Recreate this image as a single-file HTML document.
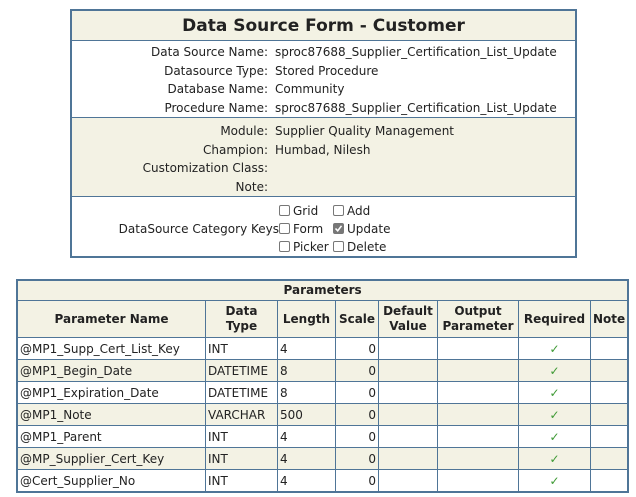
<!DOCTYPE html>
<html><head><meta charset="utf-8"><style>
body{margin:0;width:636px;height:497px;background:#fff;font-family:"DejaVu Sans",Verdana,sans-serif;font-size:12px;color:#222;position:relative;overflow:hidden}
.box{position:absolute;left:70px;top:9px;width:503px;height:245px;border:2px solid #4f7597;}
.sec{position:absolute;left:0;width:503px;}
.lab{position:absolute;right:307px;white-space:nowrap;text-align:right}
.val{position:absolute;left:203px;white-space:nowrap}
.cb{display:inline-block;width:9px;height:9px;border:1px solid #777;border-radius:2px;vertical-align:-1px;margin-right:3px;background:#fff}
.cb.on{background:#777;border-color:#777;position:relative}
table{position:absolute;left:16px;top:279px;border-collapse:collapse;border:2px solid #4f7597;font-size:12px}
td,th{border:1px solid #4f7597;padding:0 2px;height:21px;white-space:nowrap}
th{background:#f3f2e4;font-weight:bold;line-height:15px}
tr.b td{background:#f3f2e4}
.r{text-align:right}.c{text-align:center;color:#3f9a35;font-weight:bold}
</style></head><body>
<div class="box">
 <div class="sec" style="top:0;height:29px;background:#f3f2e4;border-bottom:1px solid #4f7597;text-align:center;font-weight:bold;font-size:17px;line-height:30px">Data Source Form - Customer</div>
 <div class="sec" style="top:30px;height:76px;border-bottom:1px solid #4f7597">
  <div class="lab" style="top:4px">Data Source Name:</div><div class="val" style="top:4px">sproc87688_Supplier_Certification_List_Update</div>
  <div class="lab" style="top:23px">Datasource Type:</div><div class="val" style="top:23px">Stored Procedure</div>
  <div class="lab" style="top:41px">Database Name:</div><div class="val" style="top:41px">Community</div>
  <div class="lab" style="top:60px">Procedure Name:</div><div class="val" style="top:60px">sproc87688_Supplier_Certification_List_Update</div>
 </div>
 <div class="sec" style="top:107px;height:78px;background:#f3f2e4;border-bottom:1px solid #4f7597">
  <div class="lab" style="top:6px">Module:</div><div class="val" style="top:6px">Supplier Quality Management</div>
  <div class="lab" style="top:25px">Champion:</div><div class="val" style="top:25px">Humbad, Nilesh</div>
  <div class="lab" style="top:43px">Customization Class:</div>
  <div class="lab" style="top:62px">Note:</div>
 </div>
 <div class="sec" style="top:186px;height:59px">
  <div class="lab" style="top:25px;right:296px">DataSource Category Keys</div>
  <div style="position:absolute;left:207px;top:7px;white-space:nowrap"><span class="cb"></span>Grid</div>
  <div style="position:absolute;left:261px;top:7px;white-space:nowrap"><span class="cb"></span>Add</div>
  <div style="position:absolute;left:207px;top:25px;white-space:nowrap"><span class="cb"></span>Form</div>
  <div style="position:absolute;left:261px;top:25px;white-space:nowrap"><span class="cb on"><svg width="9" height="9" style="position:absolute;left:0;top:0"><path d="M1.5 4.5 L3.7 6.8 L7.5 1.8" stroke="#fff" stroke-width="1.6" fill="none"/></svg></span>Update</div>
  <div style="position:absolute;left:207px;top:43px;white-space:nowrap"><span class="cb"></span>Picker</div>
  <div style="position:absolute;left:261px;top:43px;white-space:nowrap"><span class="cb"></span>Delete</div>
 </div>
</div>
<table>
<tr><th colspan="8" style="height:19px">Parameters</th></tr>
<tr style="height:37px"><th style="width:183px">Parameter Name</th><th style="width:67px">Data<br>Type</th><th style="width:53px">Length</th><th style="width:38px">Scale</th><th style="width:54px">Default<br>Value</th><th style="width:76px">Output<br>Parameter</th><th style="width:67px">Required</th><th style="width:32px">Note</th></tr>
<tr><td>@MP1_Supp_Cert_List_Key</td><td>INT</td><td>4</td><td class="r">0</td><td></td><td></td><td class="c">✓</td><td></td></tr>
<tr class="b"><td>@MP1_Begin_Date</td><td>DATETIME</td><td>8</td><td class="r">0</td><td></td><td></td><td class="c">✓</td><td></td></tr>
<tr><td>@MP1_Expiration_Date</td><td>DATETIME</td><td>8</td><td class="r">0</td><td></td><td></td><td class="c">✓</td><td></td></tr>
<tr class="b"><td>@MP1_Note</td><td>VARCHAR</td><td>500</td><td class="r">0</td><td></td><td></td><td class="c">✓</td><td></td></tr>
<tr><td>@MP1_Parent</td><td>INT</td><td>4</td><td class="r">0</td><td></td><td></td><td class="c">✓</td><td></td></tr>
<tr class="b"><td>@MP_Supplier_Cert_Key</td><td>INT</td><td>4</td><td class="r">0</td><td></td><td></td><td class="c">✓</td><td></td></tr>
<tr><td>@Cert_Supplier_No</td><td>INT</td><td>4</td><td class="r">0</td><td></td><td></td><td class="c">✓</td><td></td></tr>
</table>
</body></html>
